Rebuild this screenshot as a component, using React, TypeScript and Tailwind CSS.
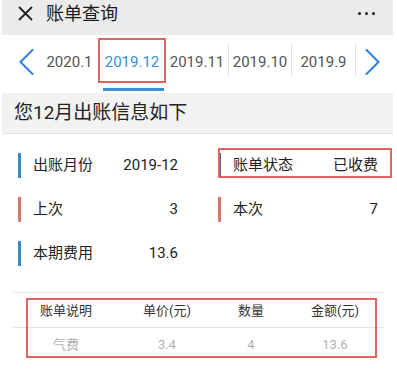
const tabs = ["2020.1", "2019.12", "2019.11", "2019.10", "2019.9"];
const tabWidths = ["w-[57px]", "w-[68px]", "w-[62px]", "w-[62px]", "w-[63px]"];

type InfoItem = {
  label: string;
  value: string;
  bar: string;
  highlight?: boolean;
};

const infoItems: InfoItem[] = [
  { label: "出账月份", value: "2019-12", bar: "bg-[#3a8cc9]" },
  { label: "账单状态", value: "已收费", bar: "bg-[#4f6a9e]", highlight: true },
  { label: "上次", value: "3", bar: "bg-[#d9756f]" },
  { label: "本次", value: "7", bar: "bg-[#d9756f]" },
  { label: "本期费用", value: "13.6", bar: "bg-[#3a8cc9]" },
];

const columns = ["账单说明", "单价(元)", "数量", "金额(元)"];
const rows = [["气费", "3.4", "4", "13.6"]];

const Chevron = ({ dir }: { dir: "left" | "right" }) => (
  <svg width="15" height="26" viewBox="0 0 15 26" fill="none">
    <path
      d={dir === "left" ? "M13.5 1 L1.5 13 L13.5 25" : "M1.5 1 L13.5 13 L1.5 25"}
      stroke="#2d7ee0"
      strokeWidth="2"
      strokeLinecap="round"
      strokeLinejoin="round"
    />
  </svg>
);

export default function App() {
  return (
    <div className="w-[397px] h-[372px] overflow-hidden bg-white font-['Roboto','Noto_Sans_CJK_SC',sans-serif]">
      {/* header */}
      <div className="ml-[2px] mr-[4px] flex h-[35px] items-center bg-[#ebebeb] pb-[8px]">
        <svg className="ml-[16px]" width="15" height="15" viewBox="0 0 15 15">
          <path d="M1 1 L14 14 M14 1 L1 14" stroke="#222" strokeWidth="1.8" />
        </svg>
        <span className="ml-[13px] text-[18px] leading-none text-[#1a1a1a]">账单查询</span>
        <div className="ml-auto mr-[18px] flex gap-[4px]">
          <span className="h-[3px] w-[3px] rounded-full bg-[#111]" />
          <span className="h-[3px] w-[3px] rounded-full bg-[#111]" />
          <span className="h-[3px] w-[3px] rounded-full bg-[#111]" />
        </div>
      </div>

      {/* month tabs */}
      <div className="flex h-[58px] items-start pt-[3px]">
        <div className="flex h-[45px] w-[41px] items-center pl-[19px] pt-[3px]">
          <Chevron dir="left" />
        </div>
        {tabs.map((tab, i) => {
          const active = tab === "2019.12";
          return (
            <div key={tab} className="flex items-center">
              <div
                className={`relative flex h-[45px] items-center justify-center text-[15px] ${tabWidths[i]} ${
                  active ? "border-2 border-[#e36262] text-[#3b90d0]" : "text-[#555]"
                }`}>
                <span className="pt-[3px]">{tab}</span>
                {active && <span className="absolute -bottom-[10px] left-[3px] right-0 h-[3px] bg-[#3a8fd3]" />}
              </div>
              {i >= 1 && i < tabs.length && !active && <span className="h-[35px] w-px bg-[#e4e4e4]" />}
            </div>
          );
        })}
        <div className="flex h-[45px] flex-1 items-center pl-[9px] pt-[3px]">
          <Chevron dir="right" />
        </div>
      </div>

      {/* section title */}
      <div className="ml-[2px] mr-[4px] flex h-[41px] items-center border-b border-[#e2e2e2] bg-[#f2f2f2] pl-[12px] text-[19px] text-[#222]">
        您12月出账信息如下
      </div>

      {/* info grid */}
      <div className="grid grid-cols-[160px_160px] gap-x-[40px] gap-y-[19px] pl-[18px] pt-[19px]">
        {infoItems.map((item) => (
          <div key={item.label} className="relative flex h-[25px] items-center text-[15px] text-[#222]">
            <span className={`h-full w-[3px] ${item.bar}`} />
            <span className="ml-[12px]">{item.label}</span>
            <span className="ml-auto">{item.value}</span>
            {item.highlight && (
              <span className="absolute -top-[5px] bottom-0 left-0 -right-[14px] border-2 border-[#e36262]" />
            )}
          </div>
        ))}
      </div>

      {/* fee table */}
      <div className="relative mx-[13px] mt-[26px] text-[13px]">
        <div className="grid h-[36px] grid-cols-[106px_96px_72px_96px] items-center border-y border-[#dfe4ec] text-center text-[#333]">
          {columns.map((col) => (
            <span key={col} className="pt-[1px]">
              {col}
            </span>
          ))}
        </div>
        {rows.map((row) => (
          <div
            key={row[0]}
            className="grid h-[34px] grid-cols-[106px_96px_72px_96px] items-center text-center text-[#b0b0b0]">
            {row.map((cell, i) => (
              <span key={i}>{cell}</span>
            ))}
          </div>
        ))}
        <span className="absolute left-[13px] top-[6px] h-[60px] w-[351px] border-2 border-[#e36262]" />
      </div>
    </div>
  );
}
